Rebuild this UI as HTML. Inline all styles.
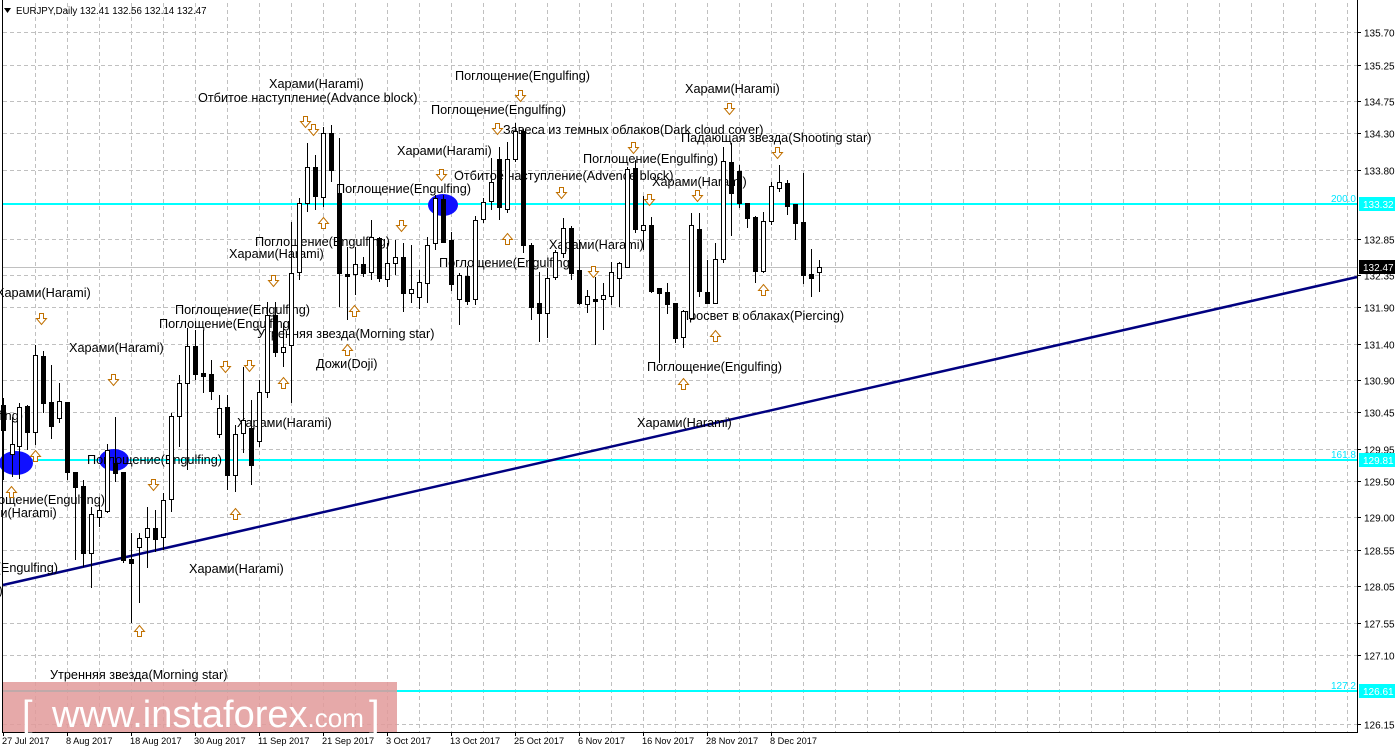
<!DOCTYPE html>
<html><head><meta charset="utf-8">
<style>
html,body{margin:0;padding:0;background:#fff;}
svg{display:block;font-family:"Liberation Sans",Arial,sans-serif;}
</style></head>
<body>
<svg id="c" width="1398" height="750" xmlns="http://www.w3.org/2000/svg">
<rect x="0" y="0" width="1398" height="750" fill="#fff"/>
<g id="grid" stroke="#c0c0c0" stroke-dasharray="4,3" stroke-width="1"></g>
<line x1="3" y1="267.5" x2="1357" y2="267.5" stroke="#c0c0c0" stroke-width="1"/>
<line x1="3" y1="204" x2="1357" y2="204" stroke="#00ffff" stroke-width="2"/>
<line x1="3" y1="460" x2="1357" y2="460" stroke="#00ffff" stroke-width="2"/>
<line x1="3" y1="691" x2="1357" y2="691" stroke="#00ffff" stroke-width="2"/>
<text x="1356" y="202" font-size="10" fill="#00e5ff" text-anchor="end">200.0</text>
<text x="1356" y="458" font-size="10" fill="#00e5ff" text-anchor="end">161.8</text>
<text x="1356" y="689" font-size="10" fill="#00e5ff" text-anchor="end">127.2</text>
<line x1="3" y1="585" x2="1357" y2="277" stroke="#000080" stroke-width="2.5"/>
<ellipse cx="16" cy="463" rx="17" ry="12" fill="#1010ff"/>
<ellipse cx="114" cy="460" rx="15" ry="11" fill="#1010ff"/>
<ellipse cx="443" cy="205" rx="15" ry="11" fill="#1010ff"/>
<g id="labels" font-size="12.7" fill="#000"></g>
<g id="candles"></g>
<g id="arrows" fill="#fff" stroke="#c07000" stroke-width="1"></g>
<line x1="1357.5" y1="0" x2="1357.5" y2="733" stroke="#000"/>
<line x1="2.5" y1="0" x2="2.5" y2="733" stroke="#000"/>
<line x1="2" y1="732.5" x2="1358" y2="732.5" stroke="#000"/>
<g id="axis" font-size="10" fill="#000"></g>
<path d="M4,8 L11,8 L7.5,13 Z" fill="#000"/>
<text x="16" y="14" font-size="9.7" fill="#000">EURJPY,Daily  132.41 132.56 132.14 132.47</text>
<rect x="3" y="682" width="394" height="50" fill="#e29a9a" opacity="0.85"/>
<text x="22" y="727" font-size="38" fill="#fff">[</text>
<text x="52" y="727" font-size="38" fill="#fff">www.instaforex<tspan font-size="26">.com</tspan></text>
<text x="369" y="727" font-size="38" fill="#fff">]</text>
</svg>
<script>
var NS="http://www.w3.org/2000/svg";
function el(p,t,a,txt){var e=document.createElementNS(NS,t);for(var k in a)e.setAttribute(k,a[k]);if(txt!=null)e.textContent=txt;p.appendChild(e);return e;}
var grid=document.getElementById('grid');
var prices=[135.70,135.25,134.75,134.30,133.80,132.85,132.35,131.90,131.40,130.90,130.45,129.95,129.50,129.00,128.55,128.05,127.55,127.10,126.15];
function py(p){return Math.round(32+(135.70-p)*72.46)+0.5;}
prices.forEach(function(p){el(grid,'line',{x1:3,y1:py(p),x2:1357,y2:py(p)});});
for(var x=35;x<1357;x+=32){el(grid,'line',{x1:x+0.5,y1:3,x2:x+0.5,y2:732});}
var axis=document.getElementById('axis');
prices.forEach(function(p){var y=py(p);el(axis,'line',{x1:1357,y1:y,x2:1361,y2:y,stroke:'#000'});el(axis,'text',{x:1364,y:y+4},p.toFixed(2));});
function box(y,val,bg,fg){el(axis,'rect',{x:1359,y:y-7,width:36,height:14,fill:bg});el(axis,'text',{x:1363,y:y+4,fill:fg},val);}
box(204,'133.32','#00ffff','#fff');box(460,'129.81','#00ffff','#fff');box(691,'126.61','#00ffff','#fff');box(267,'132.47','#000','#fff');
var dates=[[2,'27 Jul 2017'],[66,'8 Aug 2017'],[130,'18 Aug 2017'],[194,'30 Aug 2017'],[258,'11 Sep 2017'],[322,'21 Sep 2017'],[386,'3 Oct 2017'],[450,'13 Oct 2017'],[514,'25 Oct 2017'],[578,'6 Nov 2017'],[642,'16 Nov 2017'],[706,'28 Nov 2017'],[770,'8 Dec 2017']];
dates.forEach(function(d){el(axis,'line',{x1:d[0]+1.5,y1:732,x2:d[0]+1.5,y2:736,stroke:'#000'});el(axis,'text',{x:d[0],y:744,'font-size':9.2},d[1]);});
var L=document.getElementById('labels');
var labs=[[269,84,'Харами(Harami)'],[198,98,'Отбитое наступление(Advance block)'],[455,76,'Поглощение(Engulfing)'],[431,110,'Поглощение(Engulfing)'],[685,89,'Харами(Harami)'],[503,130,'Завеса из темных облаков(Dark cloud cover)'],[681,138,'Падающая звезда(Shooting star)'],[397,151,'Харами(Harami)'],[583,159,'Поглощение(Engulfing)'],[454,176,'Отбитое наступление(Advence block)'],[652,182,'Харами(Harami)'],[336,189,'Поглощение(Engulfing)'],[255,242,'Поглощение(Engulfing)'],[229,254,'Харами(Harami)'],[549,245,'Харами(Harami)'],[439,263,'Поглощение(Engulfing)'],[-4,293,'Харами(Harami)'],[175,310,'Поглощение(Engulfing)'],[159,324,'Поглощение(Engulfing)'],[680,316,'Просвет в облаках(Piercing)'],[257,334,'Утренняя звезда(Morning star)'],[69,348,'Харами(Harami)'],[316,364,'Дожи(Doji)'],[647,367,'Поглощение(Engulfing)'],[237,423,'Харами(Harami)'],[637,423,'Харами(Harami)'],[87,460,'Поглощение(Engulfing)'],[-112,416,'Поглощение(Engulfing)'],[-30,500,'Поглощение(Engulfing)'],[-38,513,'Харами(Harami)'],[-77,568,'Поглощение(Engulfing)'],[-92,591,'Харами(Harami)'],[189,569,'Харами(Harami)'],[50,675,'Утренняя звезда(Morning star)']];
labs.forEach(function(l){el(L,'text',{x:l[0],y:l[1]+4},l[2]);});
var C=document.getElementById('candles');
var cd=[[3,405,430,398,480,0],[12,444,454,417,477,1],[19,407,446,403,479,1],[27,406,432,405,450,0],[35,355,432,345,445,1],[43,356,403,351,413,0],[51,402,426,365,439,0],[59,401,418,383,423,1],[67,402,472,402,480,0],[75,472,487,472,560,0],[83,486,553,480,567,0],[91,514,553,507,588,1],[99,510,517,505,527,1],[107,450,511,444,513,1],[115,463,473,417,482,0],[123,472,560,472,563,0],[131,559,563,533,623,0],[139,538,547,533,603,1],[147,528,537,507,568,1],[155,528,539,510,552,0],[163,500,537,493,550,1],[171,416,499,413,512,1],[179,383,416,375,447,1],[187,346,383,328,470,1],[195,346,374,330,380,0],[203,373,376,330,393,0],[211,374,391,360,400,0],[219,408,434,395,438,1],[227,407,475,395,490,0],[235,434,475,425,492,1],[243,420,433,367,453,1],[251,428,465,400,485,0],[259,392,441,380,447,1],[267,315,392,302,398,1],[275,315,352,302,357,0],[283,347,352,323,367,1],[291,273,345,222,403,1],[299,203,272,198,280,1],[307,167,203,143,212,1],[315,167,196,155,210,0],[323,133,197,127,207,1],[331,133,170,125,182,0],[339,193,273,138,307,0],[347,274,276,247,320,0],[355,264,274,247,295,1],[363,264,273,257,277,0],[371,237,272,220,280,1],[379,238,278,237,282,0],[387,263,279,243,287,1],[395,257,263,240,275,1],[403,257,293,243,312,0],[411,289,293,245,303,1],[419,282,297,270,309,1],[427,245,283,237,303,1],[435,198,243,195,250,1],[443,199,242,195,243,0],[451,240,284,232,291,0],[459,275,299,273,325,1],[467,276,301,266,305,0],[475,220,299,216,305,1],[483,202,219,198,223,1],[491,182,201,158,210,1],[499,159,207,147,220,0],[507,159,209,142,213,1],[515,131,159,123,162,1],[523,131,245,129,253,0],[531,245,307,243,320,0],[539,303,313,272,342,0],[547,278,313,268,338,1],[555,252,277,250,280,1],[563,228,253,218,258,1],[571,228,273,226,280,0],[579,270,303,240,305,0],[587,296,304,290,313,1],[595,299,300,277,345,0],[603,295,299,283,330,1],[611,272,296,262,305,1],[619,263,278,262,307,1],[627,169,267,167,268,1],[635,168,229,160,233,0],[643,225,230,196,250,1],[651,225,291,217,293,0],[659,288,293,288,363,0],[667,292,304,283,314,0],[675,303,338,303,343,0],[683,311,337,310,348,1],[691,225,318,213,320,1],[699,229,291,213,297,0],[707,292,303,260,303,0],[715,259,303,243,303,1],[723,161,259,147,263,1],[731,162,193,143,236,0],[739,171,203,165,208,0],[747,203,218,203,228,0],[755,217,271,216,283,0],[763,221,271,212,273,1],[771,186,221,182,225,1],[779,182,188,165,192,1],[787,183,206,180,215,0],[795,204,223,204,240,0],[803,222,275,173,284,0],[811,274,278,249,297,0],[819,267,272,260,292,1]];
cd.forEach(function(c){var x=c[0];
el(C,'line',{x1:x+0.5,y1:c[3],x2:x+0.5,y2:c[4],stroke:'#000','stroke-width':1});
var h=Math.max(c[2]-c[1],2);
if(c[5])el(C,'rect',{x:x-1.5,y:c[1]+0.5,width:4,height:h,fill:'#fff',stroke:'#000','stroke-width':1});
else el(C,'rect',{x:x-2,y:c[1],width:5,height:h+1,fill:'#000'});
});
var A=document.getElementById('arrows');
var dn=[[41,319],[113,380],[153,485],[305,122],[313,130],[273,281],[401,226],[441,175],[497,129],[520,96],[633,148],[649,200],[561,193],[697,196],[729,109],[777,153],[593,272],[225,367],[249,366]];
var up=[[35,455],[11,491],[139,630],[235,513],[283,382],[323,222],[347,349],[354,310],[507,238],[763,289],[715,335],[683,383]];
dn.forEach(function(a){var x=a[0]+0.5,y=a[1]+0.5;el(A,'path',{d:'M'+(x-2)+','+(y-6)+'h4v5h3l-5,6l-5,-6h3z'});});
up.forEach(function(a){var x=a[0]+0.5,y=a[1]+0.5;el(A,'path',{d:'M'+(x-2)+','+(y+6)+'h4v-5h3l-5,-6l-5,6h3z'});});
</script>
</body></html>
